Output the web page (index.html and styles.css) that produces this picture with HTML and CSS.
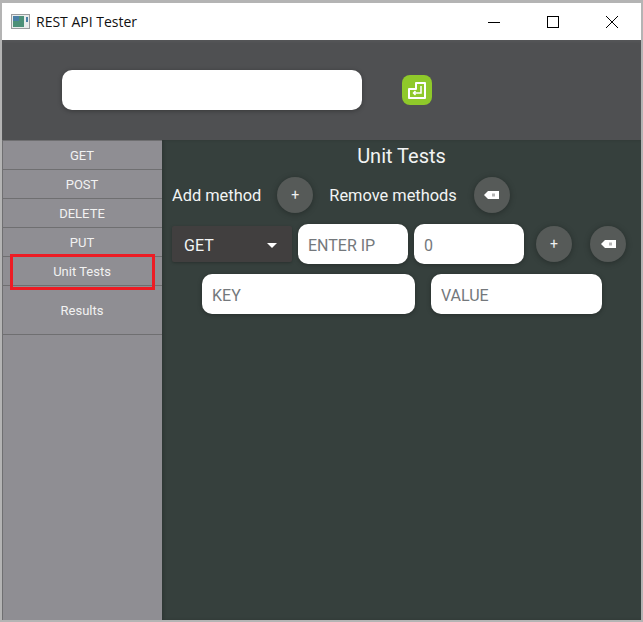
FILE: index.html
```html
<!DOCTYPE html>
<html lang="en">
<head>
    <meta charset="UTF-8">
    <meta name="viewport" content="width=device-width, initial-scale=1.0">
    <title>REST API Tester</title>
    <link rel="stylesheet" href="styles.css">
</head>
<body>
    <div class="window">
        <div class="titlebar">
            <svg class="app-icon" width="20" height="16" viewBox="0 0 20 16">
                <rect x="0.5" y="0.5" width="18" height="14" fill="#e9ecec" stroke="#9a9c9e"/>
                <rect x="2" y="2" width="11" height="11" fill="#4c9078"/>
                <rect x="2" y="2" width="6" height="5" fill="#4a7fa6"/>
                <rect x="15" y="3" width="2" height="5" fill="#4a7fa6"/>
            </svg>
            <span class="app-title">REST API Tester</span>
            <div class="win-buttons">
                <svg class="win-btn" width="14" height="14" viewBox="0 0 14 14"><path d="M1 7.5H13" stroke="#000" fill="none"/></svg>
                <svg class="win-btn" width="14" height="14" viewBox="0 0 14 14"><rect x="1.5" y="1.5" width="11" height="11" stroke="#000" fill="none"/></svg>
                <svg class="win-btn" width="14" height="14" viewBox="0 0 14 14"><path d="M1 1L13 13M13 1L1 13" stroke="#000" fill="none"/></svg>
            </div>
        </div>

        <header class="topbar">
            <input class="field url-field" type="text">
            <div class="send-btn">
                <svg width="20" height="20" viewBox="0 0 20 20">
                    <path d="M2 9H9V3H18V18H2Z" fill="none" stroke="#fff" stroke-width="2" stroke-linejoin="round"/>
                    <path d="M14 6V13H6.5M8.5 11L6.5 13L8.5 15" fill="none" stroke="#fff" stroke-width="1.5"/>
                </svg>
            </div>
        </header>

        <div class="content">
            <nav class="sidebar">
                <a class="side-item" href="#">GET</a>
                <a class="side-item" href="#">POST</a>
                <a class="side-item" href="#">DELETE</a>
                <a class="side-item" href="#">PUT</a>
                <a class="side-item active" href="#">Unit Tests</a>
                <a class="side-item tall" href="#">Results</a>
            </nav>

            <main class="panel">
                <h2 class="panel-title">Unit Tests</h2>

                <div class="row method-row">
                    <span class="label">Add method</span>
                    <button class="round-btn add-btn">+</button>
                    <span class="label remove-label">Remove methods</span>
                    <button class="round-btn remove-btn">
                        <svg width="15" height="8" viewBox="0 0 15 8"><path d="M4 0H15V8H4L0 4Z" fill="#fff"/><rect x="8" y="2.5" width="3" height="3" fill="#b5b5b5"/></svg>
                    </button>
                </div>

                <div class="row request-row">
                    <div class="select">
                        <span>GET</span>
                        <span class="caret"></span>
                    </div>
                    <input class="field ip-field" type="text" placeholder="ENTER IP">
                    <input class="field port-field" type="text" placeholder="0">
                    <button class="round-btn port-add">+</button>
                    <button class="round-btn port-remove">
                        <svg width="15" height="8" viewBox="0 0 15 8"><path d="M4 0H15V8H4L0 4Z" fill="#fff"/><rect x="8" y="2.5" width="3" height="3" fill="#b5b5b5"/></svg>
                    </button>
                </div>

                <div class="row params-row">
                    <input class="field key-field" type="text" placeholder="KEY">
                    <input class="field value-field" type="text" placeholder="VALUE">
                </div>
            </main>
        </div>
    </div>
</body>
</html>
```

FILE: styles.css
```css
* {
    box-sizing: border-box;
}

body {
    margin: 0;
    font-family: Roboto, sans-serif;
    background-color: #b4b4b4;
}

.window {
    width: 643px;
    height: 622px;
    padding: 3px 2px 2px 2px;
    display: flex;
    flex-direction: column;
    overflow: hidden;
}

.titlebar {
    height: 37px;
    flex: none;
    background-color: white;
    display: flex;
    align-items: center;
    padding-left: 9px;
}

.app-icon {
    margin-right: 5px;
}

.app-title {
    font-family: "Open Sans", sans-serif;
    font-size: 14px;
    color: #111;
}

.win-buttons {
    margin-left: auto;
    display: flex;
    gap: 45px;
    padding-right: 22px;
}

.topbar {
    height: 100px;
    flex: none;
    background-color: #4f5052;
    box-shadow: inset 0 2px 3px rgba(255, 255, 255, 0.04);
    display: flex;
    align-items: center;
    padding-left: 60px;
}

.field {
    border: none;
    outline: none;
    background-color: white;
    border-radius: 10px;
    padding: 2px 10px 0 10px;
    font-family: Roboto, sans-serif;
    font-size: 16px;
    color: #555;
    box-shadow: 0 1px 5px rgba(0, 0, 0, 0.3);
}

.field::placeholder {
    color: #74787c;
    opacity: 1;
}

.url-field {
    width: 300px;
    height: 40px;
}

.send-btn {
    width: 30px;
    height: 30px;
    margin-left: 40px;
    border-radius: 8px;
    background-color: #8fc92a;
    display: flex;
    align-items: center;
    justify-content: center;
}

.content {
    flex: 1;
    display: flex;
    min-height: 0;
}

.sidebar {
    width: 160px;
    flex: none;
    background-color: #8f8e93;
    display: flex;
    flex-direction: column;
    border-top: 1px solid #6f6f71;
    border-left: 1px solid #6f6f71;
}

.side-item {
    height: 29px;
    flex: none;
    padding: 1px 1px 0 0;
    display: flex;
    align-items: center;
    justify-content: center;
    font-size: 13px;
    color: #f2f2f2;
    text-decoration: none;
    border-bottom: 1px solid #6f6f71;
    position: relative;
}

.side-item.tall {
    height: 49px;
}

/* red box round the current page */
.side-item.active::after {
    content: "";
    box-sizing: border-box;
    position: absolute;
    left: 7px;
    right: 7px;
    top: -3px;
    height: 36px;
    border: 3px solid #ed1c24;
}

.panel {
    flex: 1;
    background-color: #36403d;
    padding: 1px 0 0 10px;
    box-shadow: inset 2px 0 3px rgba(0, 0, 0, 0.15);
}

.panel-title {
    margin: 0;
    font-size: 20px;
    font-weight: 400;
    color: #f2f4f4;
    text-align: center;
    line-height: 30px;
    padding-right: 10px;
}

.row {
    display: flex;
    align-items: center;
}

.label {
    font-size: 16.4px;
    color: #f2f4f4;
}

.method-row {
    margin-top: 6px;
    height: 36px;
}

.round-btn {
    width: 36px;
    height: 36px;
    flex: none;
    padding: 0;
    border: none;
    border-radius: 50%;
    background-color: #565a58;
    color: #f0f0f0;
    font-family: Roboto, sans-serif;
    font-size: 14px;
    box-shadow: 0 1px 6px rgba(0, 0, 0, 0.3);
    display: flex;
    align-items: center;
    justify-content: center;
}

.add-btn {
    margin-left: 16px;
}

.remove-label {
    margin-left: 16px;
}

.remove-btn {
    margin-left: 17px;
}

.request-row {
    margin-top: 11px;
    height: 40px;
}

.select {
    width: 120px;
    height: 36px;
    flex: none;
    background-color: #413f3f;
    border-radius: 2px;
    padding: 2px 15px 0 12px;
    display: flex;
    align-items: center;
    justify-content: space-between;
    font-size: 16px;
    color: #f2f4f4;
    box-shadow: 0 1px 3px rgba(0, 0, 0, 0.25);
}

.caret {
    width: 0;
    height: 0;
    border-left: 5px solid transparent;
    border-right: 5px solid transparent;
    border-top: 5px solid white;
}

.ip-field {
    width: 110px;
    height: 40px;
    margin-left: 6px;
}

.port-field {
    width: 110px;
    height: 40px;
    margin-left: 6px;
}

.port-add {
    margin-left: 12px;
}

.port-remove {
    margin-left: 18px;
}

.params-row {
    margin-top: 10px;
    padding-left: 30px;
}

.key-field {
    width: 213px;
    height: 40px;
}

.value-field {
    width: 171px;
    height: 40px;
    margin-left: 16px;
}
```
